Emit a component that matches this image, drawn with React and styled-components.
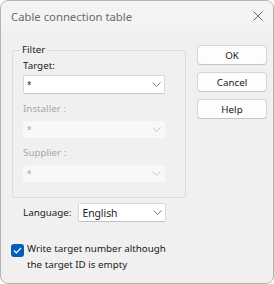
import styled, { createGlobalStyle } from "styled-components";

const GlobalStyle = createGlobalStyle`
	html, body {
		margin: 0;
		padding: 0;
		background: #ffffff;
	}
	body {
		font-family: "Noto Sans", "Open Sans", sans-serif;
		font-size: 9.8px;
	}
`;

const Window = styled.div`
	box-sizing: border-box;
	width: 274px;
	height: 284px;
	border: 1px solid #b4b4b4;
	border-radius: 8px;
	background: #f0f0f0;
	overflow: hidden;
	display: flex;
	flex-direction: column;
`;

const TitleBar = styled.div`
	height: 30px;
	flex: none;
	display: flex;
	align-items: center;
	justify-content: space-between;
	padding: 0 10px 0 10px;
	background: #f3f3f3;
	color: #6b6b6b;
	font-size: 11.3px;
`;

const Body = styled.div`
	display: flex;
	gap: 11px;
	padding: 12px 6px 0 11px;
`;

const Left = styled.div`
	width: 174px;
	display: flex;
	flex-direction: column;
`;

const Group = styled.fieldset`
	margin: 0;
	padding: 2px 18px 15px 10px;
	border: 1px solid #dcdcdc;
	border-radius: 2px;
	display: flex;
	flex-direction: column;
`;

const Legend = styled.legend`
	padding: 0 2px;
	margin-left: -3px;
	color: #1a1a1a;
	line-height: 14px;
`;

const Label = styled.div`
	line-height: 14px;
	color: ${(p) => (p.$disabled ? "#a8a8a8" : "#1a1a1a")};
	margin-top: ${(p) => p.$top || 0}px;
	margin-bottom: ${(p) => p.$bottom || 2}px;
`;

const Select = styled.div`
	box-sizing: border-box;
	height: ${(p) => (p.$disabled ? 17 : 19)}px;
	width: ${(p) => p.$width || 142}px;
	display: flex;
	align-items: center;
	justify-content: space-between;
	padding: 0 3px 0 3px;
	background: ${(p) => (p.$disabled ? "#f8f8f8" : "#ffffff")};
	border: 1px solid ${(p) => (p.$disabled ? "#f8f8f8" : "#d9d9d9")};
	border-bottom-color: ${(p) => (p.$disabled ? "#f8f8f8" : "#c2c2c2")};
	border-radius: 2px;
	color: ${(p) => (p.$disabled ? "#a0a0a0" : "#1a1a1a")};
	font-size: ${(p) => (p.$star ? 8 : 10.3)}px;
`;

const Chevron = ({ disabled }) => (
	<svg width="9" height="5" viewBox="0 0 9 5">
		<path d="M0.5 0.5 L4.5 4.5 L8.5 0.5" fill="none" stroke={disabled ? "#c8c8c8" : "#7a7a7a"} strokeWidth="1" />
	</svg>
);

const LangRow = styled.div`
	display: flex;
	align-items: center;
	gap: 7px;
	padding-left: 11px;
	margin-top: 5px;
	color: #1a1a1a;
`;

const CheckRow = styled.div`
	display: flex;
	gap: 3px;
	margin: 19px 0 0 -1px;
	color: #1a1a1a;
	line-height: 16px;
	white-space: nowrap;
`;

const Box = styled.div`
	flex: none;
	width: 13px;
	height: 13px;
	border-radius: 3px;
	background: #005fb8;
	margin-top: 3px;
	display: flex;
	align-items: center;
	justify-content: center;
`;

const Buttons = styled.div`
	display: flex;
	flex-direction: column;
	gap: 7px;
	padding-top: 2px;
`;

const Button = styled.div`
	box-sizing: border-box;
	width: 70px;
	height: 20px;
	display: flex;
	align-items: center;
	justify-content: center;
	background: #fdfdfd;
	border: 1px solid #d6d6d6;
	border-bottom-color: #c4c4c4;
	border-radius: 4px;
	color: #1a1a1a;
`;

const Combo = ({ value, disabled, width, star }) => (
	<Select $disabled={disabled} $width={width} $star={star}>
		<span>{value}</span>
		<Chevron disabled={disabled} />
	</Select>
);

export default function App() {
	return (
		<>
			<GlobalStyle />
			<Window>
				<TitleBar>
					<span>Cable connection table</span>
					<svg width="10" height="10" viewBox="0 0 10 10">
						<path d="M0.5 0.5 L9.5 9.5 M9.5 0.5 L0.5 9.5" stroke="#6b6b6b" strokeWidth="1" />
					</svg>
				</TitleBar>
				<Body>
					<Left>
						<Group>
							<Legend>Filter</Legend>
							<Label>Target:</Label>
							<Combo value="*" star />
							<Label $top={8} $bottom={5} $disabled>Installer :</Label>
							<Combo value="*" star disabled />
							<Label $top={8} $bottom={5} $disabled>Supplier :</Label>
							<Combo value="*" star disabled />
						</Group>
						<LangRow>
							<span>Language:</span>
							<Combo value="English" width={88} />
						</LangRow>
						<CheckRow>
							<Box>
								<svg width="9" height="7" viewBox="0 0 9 7">
									<path d="M1 3.5 L3.3 5.8 L8 1" fill="none" stroke="#ffffff" strokeWidth="1.2" />
								</svg>
							</Box>
							<span>
								Write target number although
								<br />
								the target ID is empty
							</span>
						</CheckRow>
					</Left>
					<Buttons>
						<Button>OK</Button>
						<Button>Cancel</Button>
						<Button>Help</Button>
					</Buttons>
				</Body>
			</Window>
		</>
	);
}
